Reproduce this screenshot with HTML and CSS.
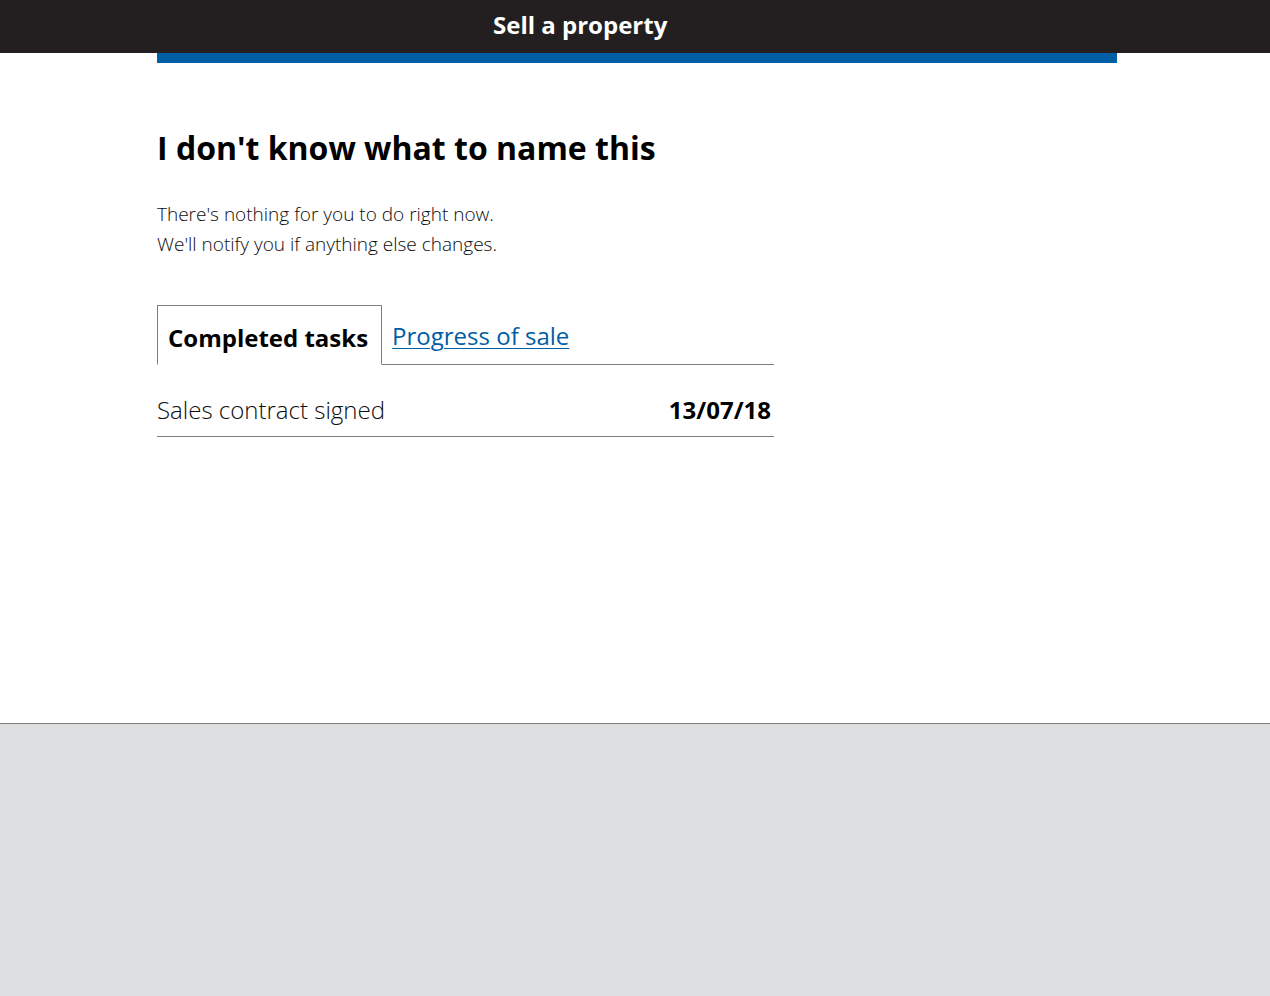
FILE: index.html
```html
<!DOCTYPE html>
<html lang="en">
<head>
<meta charset="utf-8">
<title>Sell a property</title>
<link rel="stylesheet" href="styles.css">
</head>
<body>
<div class="page">
  <header class="header">
    <div class="header-title">Sell a property</div>
  </header>
  <div class="header-bar-wrap"><div class="header-bar"></div></div>
  <main class="main">
    <div class="content">
      <h1 class="heading">I don't know what to name this</h1>
      <p class="lead">There's nothing for you to do right now.<br>We'll notify you if anything else changes.</p>
      <div class="tabs">
        <div class="tab tab-active">Completed tasks</div>
        <a class="tab tab-link" href="#">Progress of sale</a>
      </div>
      <div class="row">
        <span class="row-label">Sales contract signed</span>
        <span class="row-date">13/07/18</span>
      </div>
    </div>
  </main>
  <footer class="footer"></footer>
</div>
</body>
</html>
```
FILE: styles.css
```css
html, body {
  margin: 0;
  padding: 0;
  height: 100%;
}
body {
  font-family: "Open Sans", "Liberation Sans", sans-serif;
  color: #0b0c0c;
  background: #fff;
}
.page {
  display: flex;
  flex-direction: column;
  min-height: 996px;
}
.header {
  background: #231f20;
  height: 53px;
  display: flex;
  align-items: center;
}
.header-title {
  color: #fff;
  font-weight: 700;
  font-size: 24px;
  line-height: 53px;
  padding-left: 493px;
  margin-top: -4px;
}
.header-bar-wrap {
  padding: 0 153px 0 157px;
}
.header-bar {
  height: 10px;
  background: #005ea5;
}
.main {
  flex: 1 0 auto;
  height: 660px;
}
.content {
  width: 617px;
  margin-left: 157px;
  padding-top: 64px;
}
.heading {
  margin: 0;
  font-size: 32px;
  line-height: 42px;
  font-weight: 700;
  color: #000;
}
.lead {
  margin: 30px 0 0;
  font-size: 19px;
  line-height: 30px;
  font-weight: 300;
  color: #0b0c0c;
}
.tabs {
  display: flex;
  margin-top: 46px;
  border-bottom: 1px solid #7f7f7f;
}
.tab {
  font-size: 24px;
  line-height: 30px;
  height: 58px;
  box-sizing: border-box;
}
.tab-active {
  border: 1px solid #7f7f7f;
  border-bottom: 1px solid #fff;
  margin-bottom: -1px;
  height: 60px;
  padding: 17px 13px 0 10px;
  font-weight: 700;
  color: #000;
}
.tab-link {
  padding: 16px 10px 0;
  color: #005ea5;
  text-decoration: underline;
  text-underline-offset: 3px;
  text-decoration-thickness: 1px;
}
.row {
  display: flex;
  justify-content: space-between;
  align-items: baseline;
  padding: 29px 3px 10px 0;
  border-bottom: 1px solid #7f7f7f;
}
.row-label {
  font-size: 24px;
  font-weight: 300;
  line-height: 32px;
  color: #0b0c0c;
}
.row-date {
  font-size: 24px;
  font-weight: 700;
  line-height: 32px;
  color: #000;
}
.footer {
  height: 272px;
  background: #dedfe1;
  border-top: 1px solid #7f7f7f;
}
```
